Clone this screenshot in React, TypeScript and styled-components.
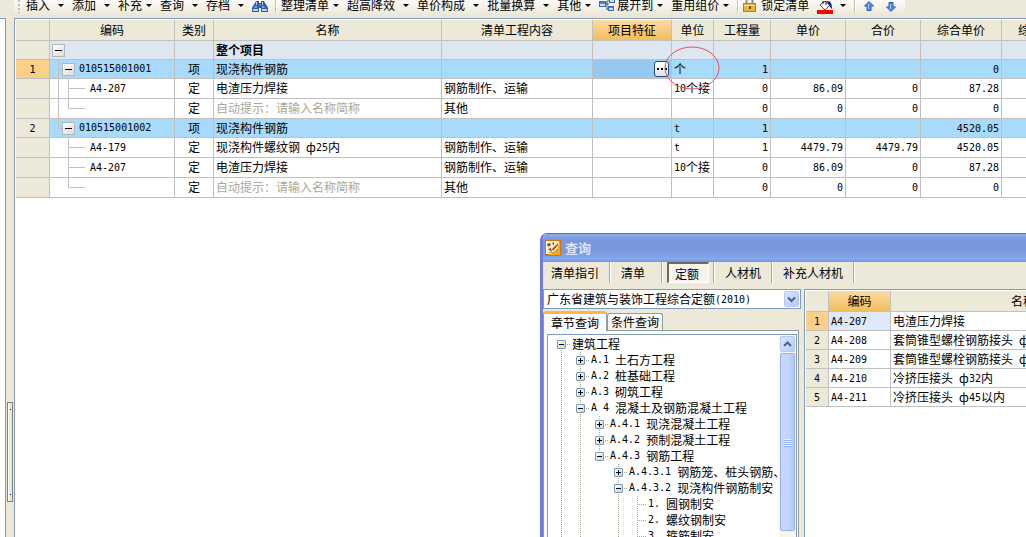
import React from 'react';
import styled, { createGlobalStyle, css } from 'styled-components';

const LINE = '#c0c0c0';
const BEIGE = '#ece9d8';
const FRAME = '#7f9db9';

const Global = createGlobalStyle`
  * { box-sizing: border-box; }
  html, body { margin: 0; padding: 0; }
  body, button, select {
    font-family: "Noto Sans CJK SC", sans-serif;
    font-size: 12px;
    line-height: 16px;
    color: #000;
  }
  button { border: 0; padding: 0; margin: 0; background: none; }
`;

const Latin = styled.span`
  font-family: "DejaVu Sans Mono", monospace;
  font-size: 10px;
  line-height: 12px;
  vertical-align: 1px;
  white-space: pre;
`;

/* Half-width runs are set in a monospace face, the rest in the CJK face. */
function Txt({ children }: { children: string }) {
  const parts = children.split(/([\x20-\x7e]+)/).filter(Boolean);
  return (
    <>
      {parts.map((p, i) => (/^[\x20-\x7e]/.test(p) ? <Latin key={i}>{p}</Latin> : <span key={i}>{p}</span>))}
    </>
  );
}

const Page = styled.div`
  position: relative;
  display: flex;
  flex-direction: column;
  height: 100vh;
  overflow: hidden;
  background: ${BEIGE};
`;

/* ---------- Toolbar ---------- */

const Toolbar = styled.div`
  display: flex;
  flex: none;
  height: 18px;
  padding-left: 14px;
  overflow: hidden;
`;

const ToolStrip = styled.div`
  display: flex;
  align-items: flex-start;
  flex: none;
  height: 17px;
  padding: 0 9px 0 4px;
  background: linear-gradient(#fbfaf7, #f1eee2 60%, #e9e5d4);
  border-radius: 0 0 3px 0;
`;

const Grip = styled.span`
  width: 2px;
  height: 13px;
  margin-right: 6px;
  background: repeating-linear-gradient(#c1bda9 0 2px, transparent 2px 4px);
`;

const ToolButton = styled.button<{ $gap?: number }>`
  display: flex;
  flex: none;
  align-items: center;
  gap: ${p => p.$gap ?? 8}px;
  height: 16px;
  margin: -3px 8px 0 0;
  white-space: nowrap;
`;

const IconButton = styled.button<{ $w?: number }>`
  flex: none;
  width: ${p => p.$w ?? 16}px;
  height: 14px;
  svg { display: block; }
`;

const Caret = styled.span`
  border: 3px solid transparent;
  border-top-color: #000;
  border-bottom: 0;
`;

const ToolSep = styled.span`
  width: 2px;
  height: 13px;
  margin: 0 4px 0 0;
  background: linear-gradient(90deg, #c5c2b0 50%, #fff 50%);
`;

const Binoculars = () => (
  <svg width="16" height="12" viewBox="0 0 16 12">
    <path d="M4 0h3v2h2V0h3l1 2 2 3 1 2v4H9V7H7v4H0V7l1-2 2-3z" fill="#2f5ba8" />
    <path d="M1 8h5v2H1zM10 8h5v2h-5zM4 1h1v3H4zM10 1h1v3h-1z" fill="#b9d1f6" />
    <path d="M3 5h2v2H2zM10 5h2l1 2h-3z" fill="#7ea6e6" />
    <path d="M7 3h2v2H7z" fill="#6f7f9c" />
  </svg>
);

const Nodes = () => (
  <svg width="16" height="12" viewBox="0 0 16 12">
    <path d="M6 4h4M8 1v9M8 1h2M8 9h2" stroke="#44526b" fill="none" />
    <rect x=".5" y="1.5" width="6" height="5" fill="#cfe0fb" stroke="#3a68b8" />
    <rect x="10.500" y="-1.500" width="5" height="4" fill="#cfe0fb" stroke="#3a68b8" />
    <rect x="9.500" y="6.500" width="5" height="4" fill="#cfe0fb" stroke="#3a68b8" />
    <path d="M1 2h5v2H1zM10 7h4v1h-4z" fill="#4d86dd" />
  </svg>
);

const Lock = () => (
  <svg width="13" height="12" viewBox="0 0 13 12">
    <path d="M3.500 5V1a3 3 0 0 1 6 0v4" stroke="#8d8d8d" strokeWidth="2" fill="none" />
    <rect x=".5" y="3.500" width="12" height="8" fill="#e3b646" stroke="#b5801c" />
    <path d="M1 5h11v1H1z" fill="#fae7a4" />
    <path d="M6 6h2v3H6z" fill="#73500c" />
  </svg>
);

const Bucket = () => (
  <svg width="17" height="13" viewBox="0 0 17 13">
    <path d="M3 4l5-4 5 4-5 5z" fill="#fff" stroke="#555" />
    <path d="M6 3V0h3v4" stroke="#222" fill="none" />
    <path d="M10 0c4 0 5 3 5 8-2-1-2-4-4-5z" fill="#16168c" />
    <path d="M0 9h16v4H0z" fill="#f00" />
  </svg>
);

const Arrow = ({ down }: { down?: boolean }) => (
  <svg width="10" height="12" viewBox="0 0 10 12">
    <path
      d={down ? 'M3 1.500h4V6h2.500L5 10.500.5 6H3z' : 'M3 9.500h4V5h2.500L5 .5.5 5H3z'}
      fill="#4b8bf0"
      stroke="#2a5ecb"
    />
    <path d="M4 3h1v5H4z" fill="#a8cbff" />
  </svg>
);

/* ---------- Main area ---------- */

const Body = styled.div`
  display: flex;
  flex: 1;
  min-height: 0;
`;

const SidePane = styled.div`
  flex: none;
  width: 6px;
  background: #fff;
  border: solid ${FRAME};
  border-width: 1px 1px 0 0;
`;

const Splitter = styled.div`
  display: flex;
  flex: none;
  flex-direction: column;
  align-items: center;
  justify-content: flex-end;
  width: 8px;
  padding-bottom: 35px;
`;

const SplitHandle = styled.div`
  display: flex;
  flex-direction: column;
  align-items: center;
  justify-content: space-between;
  width: 6px;
  height: 100px;
  padding: 6px 0;
  border: 1px solid #848277;
  background: linear-gradient(90deg, #fff 25%, ${BEIGE} 25%);
  i { width: 1px; height: 1px; background: #000080; }
`;

const Sheet = styled.main`
  flex: 1;
  min-width: 0;
  overflow: hidden;
  background: #fff;
  border: solid ${FRAME};
  border-width: 1px 0 0 1px;
  padding: 1px 0 0 1px;
`;

const Grid = styled.table`
  table-layout: fixed;
  border-collapse: separate;
  border-spacing: 0;
  min-width: 1067px;
  width: 100%;
`;

const Head = styled.th<{ $active?: boolean }>`
  height: 21px;
  padding: 0 0 1px;
  overflow: hidden;
  font-weight: 400;
  white-space: nowrap;
  background: ${p => (p.$active ? 'linear-gradient(#fbdba4, #f2bd5c)' : BEIGE)};
  border: solid ${LINE};
  border-width: 0 1px 1px 0;
`;

type Kind = 'group' | 'item' | 'sub';

const tones: Record<Kind, string> = { group: '#dee6f0', item: '#a8dbfb', sub: '#fff' };

const Row = styled.tr<{ $kind: Kind }>`
  height: ${p => (p.$kind === 'sub' ? 20 : 19)}px;
  background: ${p => tones[p.$kind]};
`;

const Cell = styled.td<{ $align?: string; $hint?: boolean; $picked?: boolean }>`
  padding: 0 2px 1px;
  overflow: hidden;
  line-height: 16px;
  white-space: nowrap;
  text-align: ${p => p.$align ?? 'left'};
  border: solid ${LINE};
  border-width: 0 1px 1px 0;
  ${p => p.$hint && css`color: #aca899;`}
  ${p => p.$picked && css`background: #96c8f0;`}
`;

const RowHead = styled.th<{ $active?: boolean }>`
  padding: 0 0 1px;
  font-weight: 400;
  line-height: 16px;
  background: ${p => (p.$active ? '#fdd089' : BEIGE)};
  border: solid ${LINE};
  border-width: 0 1px 1px 0;
`;

const CodeCell = styled(Cell)`
  padding: 0;
`;

const CodeBox = styled.div`
  display: flex;
  align-items: center;
  height: 18px;
  svg { flex: none; display: block; }
`;

const Toggle = styled.button`
  flex: none;
  width: 13px;
  height: 13px;
  border: 1px solid #b5b5b5;
  background: linear-gradient(#000, #000) center / 7px 1px no-repeat, linear-gradient(135deg, #fff, #dcdcdc);
`;

const Branch = styled.span<{ $w: number }>`
  flex: none;
  width: ${p => p.$w}px;
`;

const More = styled.button`
  display: flex;
  align-items: center;
  justify-content: center;
  gap: 2px;
  width: 15px;
  height: 16px;
  margin-left: auto;
  border: 1px solid #1f4f80;
  border-radius: 3px;
  background: linear-gradient(#fff, #e4e2da);
  i { width: 2px; height: 2px; background: #000; }
`;

const Mark = styled.svg`
  position: absolute;
  left: 663px;
  top: 45px;
  pointer-events: none;
`;

interface Line {
  kind: Kind;
  no?: string;
  code?: string;
  type?: string;
  name: string;
  work?: string;
  unit?: string;
  nums?: string[];
  last?: boolean;
  outer?: boolean;
}

const hint = '自动提示：请输入名称简称';

const lines: Line[] = [
  { kind: 'group', name: '整个项目' },
  { kind: 'item', no: '1', code: '010515001001', type: '项', name: '现浇构件钢筋', unit: '个', nums: ['1', '', '', '0'], outer: true },
  { kind: 'sub', code: 'A4-207', type: '定', name: '电渣压力焊接', work: '钢筋制作、运输', unit: '10个接', nums: ['0', '86.09', '0', '87.28'], outer: true },
  { kind: 'sub', type: '定', name: hint, work: '其他', nums: ['0', '0', '0', '0'], last: true, outer: true },
  { kind: 'item', no: '2', code: '010515001002', type: '项', name: '现浇构件钢筋', unit: 't', nums: ['1', '', '', '4520.05'] },
  { kind: 'sub', code: 'A4-179', type: '定', name: '现浇构件螺纹钢 ф25内', work: '钢筋制作、运输', unit: 't', nums: ['1', '4479.79', '4479.79', '4520.05'] },
  { kind: 'sub', code: 'A4-207', type: '定', name: '电渣压力焊接', work: '钢筋制作、运输', unit: '10个接', nums: ['0', '86.09', '0', '87.28'] },
  { kind: 'sub', type: '定', name: hint, work: '其他', nums: ['0', '0', '0', '0'], last: true },
];

function Code({ line }: { line: Line }) {
  if (line.kind === 'group') {
    return (
      <CodeBox>
        <Branch $w={2} />
        <Toggle aria-label="折叠" />
      </CodeBox>
    );
  }
  if (line.kind === 'item') {
    return (
      <CodeBox>
        <svg width="12" height="19" viewBox="0 0 12 19">
          <path d={`M8.500 0V${line.outer ? 19 : 9}M8.500 9.500H12`} stroke={LINE} fill="none" />
        </svg>
        <Toggle aria-label="折叠" />
        <Branch $w={4} />
        <Txt>{line.code!}</Txt>
      </CodeBox>
    );
  }
  return (
    <CodeBox>
      <svg width="40" height="19" viewBox="0 0 40 19">
        <path
          d={`${line.outer ? 'M8.500 0V19' : ''}M18.500 0V${line.last ? 9 : 19}M18.500 9.500H35`}
          stroke={LINE}
          fill="none"
        />
      </svg>
      {line.code && <Txt>{line.code}</Txt>}
    </CodeBox>
  );
}

const columns: [string, number | undefined][] = [
  ['', 34], ['编码', 125], ['类别', 39], ['名称', 228], ['清单工程内容', 151], ['项目特征', 79],
  ['单位', 42], ['工程量', 57], ['单价', 75], ['合价', 75], ['综合单价', 81], ['综合合价', undefined],
];

/* ---------- Query window ---------- */

const Dialog = styled.section`
  position: absolute;
  left: 540px;
  top: 233px;
  bottom: 0;
  right: -130px;
  display: flex;
  flex-direction: column;
  overflow: hidden;
  border-left: 3px solid #6f7fe0;
  border-radius: 7px 0 0 0;
  background: ${BEIGE};
`;

const TitleBar = styled.header`
  display: flex;
  flex: none;
  align-items: center;
  gap: 4px;
  height: 29px;
  margin-left: -3px;
  padding-left: 5px;
  border-top: 1px solid #4d6fc4;
  background: linear-gradient(#90aeea, #7a96df 20%, #7a96df 60%, #84a9eb 90%, #7490dc);
  color: #dbe5fb;
  font-size: 13px;
  font-weight: 700;
`;

const TabBar = styled.nav`
  display: flex;
  flex: none;
  height: 27px;
`;

const BarTab = styled.button<{ $on?: boolean }>`
  flex: none;
  height: 21px;
  min-width: 46px;
  padding: 0 8px;
  line-height: 19px;
  text-align: left;
  white-space: nowrap;
  ${p =>
    p.$on &&
    css`
      min-width: 42px;
      height: 21px;
      margin: 0 2px;
      padding: 0 6px;
      border: solid;
      border-color: #6e6b5e #fff #fff #6e6b5e;
      border-width: 2px 1px 1px 2px;
      background: #f6f4ec;
      line-height: 17px;
    `}
`;

const BarSep = styled.span`
  width: 2px;
  height: 21px;
  margin: 0 2px;
  background: linear-gradient(90deg, #aca899 50%, #fff 50%);
`;

const DialogBody = styled.div`
  display: flex;
  flex: 1;
  gap: 3px;
  min-height: 0;
`;

const Left = styled.div`
  display: flex;
  flex: none;
  flex-direction: column;
  width: 258px;
`;

const Combo = styled.label`
  display: flex;
  flex: none;
  align-items: center;
  position: relative;
  height: 20px;
  border: 1px solid ${FRAME};
  background: #fff;
`;

const ComboText = styled.span`
  flex: 1;
  padding-left: 3px;
  white-space: nowrap;
`;

const ComboSelect = styled.select`
  position: absolute;
  inset: 0;
  width: 100%;
  opacity: 0;
`;

const Square = styled.span`
  display: flex;
  flex: none;
  align-items: center;
  justify-content: center;
  width: 15px;
  height: 16px;
  margin-right: 1px;
  border: 1px solid #b5c8f5;
  border-radius: 2px;
  background: linear-gradient(135deg, #dbe6fe, #b5cbfb);
`;

const SubTabs = styled.div`
  display: flex;
  flex: none;
  align-items: flex-end;
  height: 20px;
  margin-top: 1px;
`;

const SubTab = styled.button<{ $on?: boolean }>`
  flex: none;
  border: 1px solid #919b9c;
  border-bottom: 0;
  border-radius: 3px 3px 0 0;
  white-space: nowrap;
  ${p =>
    p.$on
      ? css`
          z-index: 1;
          height: 20px;
          margin-bottom: -1px;
          width: 64px;
          border-top: 3px solid #fcb844;
          background: #fcfcfe;
          line-height: 14px;
        `
      : css`
          height: 17px;
          width: 56px;
          background: linear-gradient(#fff, #f0f0ea);
          line-height: 16px;
        `}
`;

const TreePanel = styled.div`
  display: flex;
  flex: 1;
  min-height: 0;
  margin-right: 2px;
  padding: 3px 1px 0 3px;
  border: solid #919b9c;
  border-width: 1px 1px 0 1px;
  background: #fcfcfe;
`;

const TreeFrame = styled.div`
  display: flex;
  flex: 1;
  min-width: 0;
  border: solid ${FRAME};
  border-width: 1px 1px 0 1px;
  background: #fff;
`;

const Tree = styled.ul`
  flex: 1;
  min-width: 0;
  margin: 0;
  padding: 1px 0 0 9px;
  overflow: hidden;
  list-style: none;
`;

const Node = styled.li`
  display: flex;
  align-items: center;
  height: 16px;
  white-space: nowrap;
`;

const dots = (dir: string) => `repeating-linear-gradient(${dir}, #a9a694 0 1px, transparent 1px 2px)`;

const Guide = styled.span<{ $on: boolean }>`
  flex: none;
  width: 19px;
  height: 16px;
  background: ${p => (p.$on ? `${dots('180deg')} 4px 0 / 1px 16px no-repeat` : 'none')};
`;

const Joint = styled.span<{ $up: boolean; $down: boolean }>`
  display: flex;
  flex: none;
  align-items: center;
  width: 15px;
  height: 16px;
  background:
    ${dots('180deg')} 4px 0 / 1px ${p => (p.$up ? 8 : 0)}px no-repeat,
    ${dots('180deg')} 4px 8px / 1px ${p => (p.$down ? 8 : 0)}px no-repeat,
    ${dots('90deg')} 4px 8px / 10px 1px no-repeat;
`;

const Box = styled.button<{ $open?: boolean }>`
  width: 9px;
  height: 9px;
  border: 1px solid #7898b5;
  border-radius: 1px;
  background:
    linear-gradient(#000, #000) center / 5px 1px no-repeat,
    linear-gradient(#000, #000) center / 1px ${p => (p.$open ? 0 : 5)}px no-repeat,
    linear-gradient(135deg, #fff, #d5d0c4);
`;

const Scroll = styled.div`
  display: flex;
  flex: none;
  flex-direction: column;
  align-items: center;
  width: 17px;
  padding: 1px 0 6px;
  background: #f6f5f0;
`;

const Thumb = styled.div`
  display: flex;
  flex: 1;
  flex-direction: column;
  align-items: center;
  justify-content: center;
  gap: 1px;
  width: 15px;
  margin-top: 1px;
  border: 1px solid #98b1e4;
  border-radius: 2px;
  background: linear-gradient(90deg, #cad8fd, #c2d3fd 60%, #b3c8f8);
  i { width: 7px; height: 1px; background: #eef4fe; box-shadow: 0 1px #8cb0f8; }
`;

const Result = styled.div`
  flex: 1;
  min-width: 0;
  overflow: hidden;
  padding: 1px 0 0 1px;
  background: #fff;
  border: solid ${FRAME};
  border-width: 1px 0 0 1px;
`;

const ResultGrid = styled(Grid)`
  min-width: 0;
`;

const ResultRow = styled.tr`
  height: 19px;
`;

const CodePick = styled(Cell)<{ $on: boolean }>`
  background: ${p => (p.$on ? '#dee8f6' : '#fff')};
`;

const Chevron = ({ up }: { up?: boolean }) => (
  <svg width="9" height="7" viewBox="0 0 9 7">
    <path d={up ? 'M1 5l3.500-3.500L8 5' : 'M1 1.500L4.500 5 8 1.500'} stroke="#4d6185" strokeWidth="2" fill="none" />
  </svg>
);

const AppIcon = () => (
  <svg width="16" height="16" viewBox="0 0 16 16">
    <rect width="16" height="16" fill="#d9720a" />
    <rect x="1" y="1" width="13" height="13" fill="#fff6dc" />
    <path d="M15 1v14H3l5-2 4-4z" fill="#f7a823" />
    <path d="M2 4l3-1 1 2-3 2zM7 3l2-1v4zM3 9l3-1 1 4zM7 9l6-6v2l-5 6z" fill="#9a4a08" />
    <path d="M4 12l4 1 5-4" stroke="#e0820f" fill="none" />
  </svg>
);

interface TreeItem {
  text: string;
  guides: number[];
  open?: boolean;
  leaf?: boolean;
  up?: boolean;
  down?: boolean;
}

const tree: TreeItem[] = [
  { text: '建筑工程', guides: [], open: true, up: false, down: true },
  { text: 'A.1 土石方工程', guides: [1] },
  { text: 'A.2 桩基础工程', guides: [1] },
  { text: 'A.3 砌筑工程', guides: [1] },
  { text: 'A 4 混凝土及钢筋混凝土工程', guides: [1], open: true },
  { text: 'A.4.1 现浇混凝土工程', guides: [1, 1] },
  { text: 'A.4.2 预制混凝土工程', guides: [1, 1] },
  { text: 'A.4.3 钢筋工程', guides: [1, 1], open: true, down: false },
  { text: 'A.4.3.1 钢筋笼、桩头钢筋、', guides: [1, 1, 0] },
  { text: 'A.4.3.2 现浇构件钢筋制安', guides: [1, 1, 0], open: true },
  { text: '1. 圆钢制安', guides: [1, 1, 0, 1], leaf: true },
  { text: '2. 螺纹钢制安', guides: [1, 1, 0, 1], leaf: true },
  { text: '3. 箍筋制安', guides: [1, 1, 0, 1], leaf: true },
];

const results = [
  ['A4-207', '电渣压力焊接'],
  ['A4-208', '套筒锥型螺栓钢筋接头 ф25内'],
  ['A4-209', '套筒锥型螺栓钢筋接头 ф32内'],
  ['A4-210', '冷挤压接头 ф32内'],
  ['A4-211', '冷挤压接头 ф45以内'],
];

function Tool({ label, gap, icon }: { label: string; gap?: number; icon?: React.ReactNode }) {
  return (
    <>
      {icon}
      <ToolButton $gap={gap}>
        {label}
        <Caret />
      </ToolButton>
    </>
  );
}

const IconSlot = styled.span<{ $w: number }>`
  flex: none;
  width: ${p => p.$w}px;
  svg { display: block; }
`;

export default function App() {
  return (
    <Page>
      <Global />
      <Toolbar>
        <ToolStrip>
          <Grip />
          <Tool label="插入" />
          <Tool label="添加" />
          <Tool label="补充" gap={4} />
          <Tool label="查询" />
          <Tool label="存档" />
          <IconButton $w={23} aria-label="查找"><Binoculars /></IconButton>
          <ToolSep />
          <Tool label="整理清单" gap={4} />
          <Tool label="超高降效" />
          <Tool label="单价构成" />
          <Tool label="批量换算" />
          <Tool label="其他" gap={4} />
          <Tool label="展开到" gap={4} icon={<IconSlot $w={18}><Nodes /></IconSlot>} />
          <Tool label="重用组价" gap={4} />
          <ToolSep />
          <IconSlot $w={18}><Lock /></IconSlot>
          <ToolButton>锁定清单</ToolButton>
          <IconButton $w={23} aria-label="填充颜色"><Bucket /></IconButton>
          <ToolButton aria-label="更多颜色"><Caret /></ToolButton>
          <ToolSep />
          <IconSlot $w={4} />
          <IconButton $w={22} aria-label="上移"><Arrow /></IconButton>
          <IconButton $w={10} aria-label="下移"><Arrow down /></IconButton>
        </ToolStrip>
      </Toolbar>

      <Body>
        <SidePane />
        <Splitter>
          <SplitHandle><i /><i /></SplitHandle>
        </Splitter>
        <Sheet>
          <Grid>
            <colgroup>
              {columns.map(([label, w], i) => <col key={label + i} width={w} />)}
            </colgroup>
            <thead>
              <tr>
                {columns.map(([label]) => (
                  <Head key={label} $active={label === '项目特征'}>{label}</Head>
                ))}
              </tr>
            </thead>
            <tbody>
              {lines.map((l, i) => {
                const picked = i === 1;
                const nums = l.nums ?? ['', '', '', ''];
                return (
                  <Row key={i} $kind={l.kind}>
                    <RowHead $active={picked}>{l.no && <Txt>{l.no}</Txt>}</RowHead>
                    <CodeCell><Code line={l} /></CodeCell>
                    <Cell $align="center">{l.type}</Cell>
                    <Cell $hint={l.name === hint}>
                      {l.kind === 'group' ? <b>{l.name}</b> : <Txt>{l.name}</Txt>}
                    </Cell>
                    <Cell>{l.work}</Cell>
                    <Cell $picked={picked}>
                      {picked && <More aria-label="编辑项目特征"><i /><i /><i /></More>}
                    </Cell>
                    <Cell>{l.unit && <Txt>{l.unit}</Txt>}</Cell>
                    {nums.map((n, k) => <Cell key={k} $align="right">{n && <Txt>{n}</Txt>}</Cell>)}
                    <Cell />
                  </Row>
                );
              })}
            </tbody>
          </Grid>
        </Sheet>
      </Body>

      <Mark width="58" height="46" viewBox="0 0 58 46">
        <ellipse cx="29" cy="23" rx="27" ry="21" fill="none" stroke="#e8505a" />
      </Mark>

      <Dialog aria-label="查询">
        <TitleBar>
          <AppIcon />
          查询
        </TitleBar>
        <TabBar>
          <BarTab>清单指引</BarTab>
          <BarSep />
          <BarTab>清单</BarTab>
          <BarSep />
          <BarTab $on>定额</BarTab>
          <BarSep />
          <BarTab>人材机</BarTab>
          <BarSep />
          <BarTab>补充人材机</BarTab>
          <BarSep />
        </TabBar>
        <DialogBody>
          <Left>
            <Combo>
              <ComboText><Txt>广东省建筑与装饰工程综合定额(2010)</Txt></ComboText>
              <Square><Chevron /></Square>
              <ComboSelect aria-label="定额库">
                <option>广东省建筑与装饰工程综合定额(2010)</option>
              </ComboSelect>
            </Combo>
            <SubTabs role="tablist">
              <SubTab $on role="tab" aria-selected>章节查询</SubTab>
              <SubTab role="tab">条件查询</SubTab>
            </SubTabs>
            <TreePanel>
              <TreeFrame>
                <Tree>
                  {tree.map(n => (
                    <Node key={n.text}>
                      {n.guides.map((g, i) => <Guide key={i} $on={!!g} />)}
                      <Joint $up={n.up ?? true} $down={n.down ?? true}>
                        {!n.leaf && <Box $open={n.open} aria-label={n.open ? '折叠' : '展开'} />}
                      </Joint>
                      <Txt>{n.text}</Txt>
                    </Node>
                  ))}
                </Tree>
                <Scroll>
                  <Square><Chevron up /></Square>
                  <Thumb><i /><i /><i /><i /></Thumb>
                </Scroll>
              </TreeFrame>
            </TreePanel>
          </Left>
          <Result>
            <ResultGrid>
              <colgroup>
                <col width={23} />
                <col width={62} />
                <col />
              </colgroup>
              <thead>
                <tr>
                  <Head />
                  <Head $active>编码</Head>
                  <Head>名称</Head>
                </tr>
              </thead>
              <tbody>
                {results.map(([code, name], i) => (
                  <ResultRow key={code}>
                    <RowHead $active={i === 0}><Txt>{String(i + 1)}</Txt></RowHead>
                    <CodePick $on={i === 0}><Txt>{code}</Txt></CodePick>
                    <Cell><Txt>{name}</Txt></Cell>
                  </ResultRow>
                ))}
              </tbody>
            </ResultGrid>
          </Result>
        </DialogBody>
      </Dialog>
    </Page>
  );
}
